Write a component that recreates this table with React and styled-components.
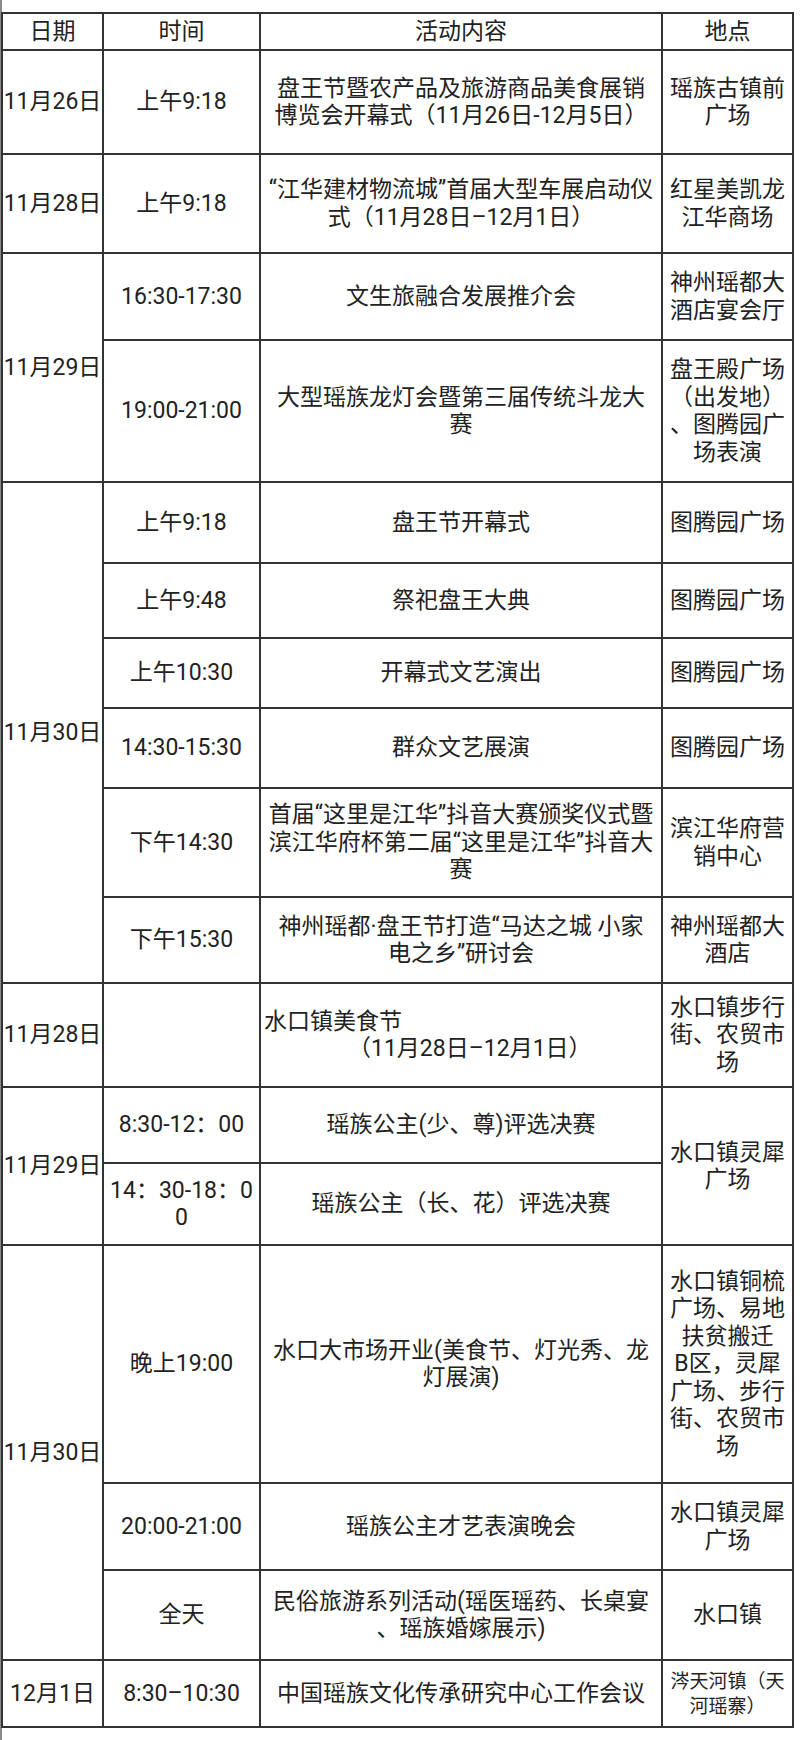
import React from 'react';
import styled, { createGlobalStyle } from 'styled-components';

const GlobalStyle = createGlobalStyle`
  html, body {
    margin: 0;
    padding: 0;
    background: #ffffff;
  }
  body {
    font-family: Roboto, "Noto Sans CJK SC", "Noto Sans", sans-serif;
    color: #222;
  }
`;

const Page = styled.div`
  min-height: 1740px;
  box-sizing: border-box;
  padding-top: 12px;
  border-left: 2px solid #8a8a8a;
`;

const Sheet = styled.table`
  border-collapse: collapse;
  table-layout: fixed;
  width: 790px;
  margin-left: -1px;
  font-size: 23px;
  line-height: 27.5px;
`;

const Row = styled.tr`
  height: ${p => p.$h}px;
`;

const Cell = styled.td`
  border: 2px solid #333;
  padding: 0 3px;
  text-align: center;
  vertical-align: middle;
  overflow: visible;
`;

const HeadCell = styled(Cell).attrs({ as: 'th' })`
  font-weight: 400;
`;

const DateCell = styled(Cell)`
  padding: 0;
  white-space: nowrap;
`;

const TimeCell = styled(Cell)`
  padding: 0 2px;
`;

const EventCell = styled(Cell)`
  text-align: ${p => (p.$left ? 'left' : 'center')};
`;

const PlaceCell = styled(Cell)`
  padding: 0 2px;
  font-size: ${p => (p.$small ? '19px' : '23px')};
  line-height: ${p => (p.$small ? '25px' : '27.5px')};
`;

const Line = styled.span`
  display: block;
  white-space: nowrap;
  padding-left: ${p => p.$indent || 0}px;
`;

const Lines = ({ items }) =>
  items.map((t, i) =>
    typeof t === 'string' ? <Line key={i}>{t}</Line> : <Line key={i} $indent={t.indent}>{t.text}</Line>
  );

const rows = [
  { h: 104, date: '11月26日', time: ['上午9:18'], event: ['盘王节暨农产品及旅游商品美食展销', '博览会开幕式（11月26日-12月5日）'], place: ['瑶族古镇前', '广场'] },
  { h: 99, date: '11月28日', time: ['上午9:18'], event: ['“江华建材物流城”首届大型车展启动仪', '式（11月28日–12月1日）'], place: ['红星美凯龙', '江华商场'] },
  { h: 87, date: '11月29日', span: 2, time: ['16:30-17:30'], event: ['文生旅融合发展推介会'], place: ['神州瑶都大', '酒店宴会厅'] },
  { h: 142, time: ['19:00-21:00'], event: ['大型瑶族龙灯会暨第三届传统斗龙大', '赛'], place: ['盘王殿广场', '（出发地）', '、图腾园广', '场表演'] },
  { h: 81, date: '11月30日', span: 6, time: ['上午9:18'], event: ['盘王节开幕式'], place: ['图腾园广场'] },
  { h: 75, time: ['上午9:48'], event: ['祭祀盘王大典'], place: ['图腾园广场'] },
  { h: 70, time: ['上午10:30'], event: ['开幕式文艺演出'], place: ['图腾园广场'] },
  { h: 80, time: ['14:30-15:30'], event: ['群众文艺展演'], place: ['图腾园广场'] },
  { h: 109, time: ['下午14:30'], event: ['首届“这里是江华”抖音大赛颁奖仪式暨', '滨江华府杯第二届“这里是江华”抖音大', '赛'], place: ['滨江华府营', '销中心'] },
  { h: 86, time: ['下午15:30'], event: ['神州瑶都·盘王节打造“马达之城 小家', '电之乡”研讨会'], place: ['神州瑶都大', '酒店'] },
  { h: 104, date: '11月28日', time: [], left: true, event: ['水口镇美食节', { text: '（11月28日–12月1日）', indent: 84 }], place: ['水口镇步行', '街、农贸市', '场'] },
  { h: 76, date: '11月29日', span: 2, time: ['8:30-12：00'], event: ['瑶族公主(少、尊)评选决赛'], place: ['水口镇灵犀', '广场'], placeSpan: 2 },
  { h: 82, time: ['14：30-18：0', '0'], event: ['瑶族公主（长、花）评选决赛'], noPlace: true },
  { h: 238, date: '11月30日', span: 3, time: ['晚上19:00'], event: ['水口大市场开业(美食节、灯光秀、龙', '灯展演)'], place: ['水口镇铜梳', '广场、易地', '扶贫搬迁', 'B区，灵犀', '广场、步行', '街、农贸市', '场'] },
  { h: 87, time: ['20:00-21:00'], event: ['瑶族公主才艺表演晚会'], place: ['水口镇灵犀', '广场'] },
  { h: 90, time: ['全天'], event: ['民俗旅游系列活动(瑶医瑶药、长桌宴', '、瑶族婚嫁展示)'], place: ['水口镇'] },
  { h: 67, date: '12月1日', time: ['8:30–10:30'], event: ['中国瑶族文化传承研究中心工作会议'], place: ['涔天河镇（天', '河瑶寨）'], small: true },
];

const App = () => (
  <>
    <GlobalStyle />
    <Page>
      <Sheet>
        <colgroup>
          <col style={{ width: 101 }} />
          <col style={{ width: 157 }} />
          <col style={{ width: 402 }} />
          <col style={{ width: 131 }} />
        </colgroup>
        <tbody>
          <Row $h={37}>
            <HeadCell>日期</HeadCell>
            <HeadCell>时间</HeadCell>
            <HeadCell>活动内容</HeadCell>
            <HeadCell>地点</HeadCell>
          </Row>
          {rows.map((r, i) => (
            <Row key={i} $h={r.h}>
              {r.date && <DateCell rowSpan={r.span || 1}>{r.date}</DateCell>}
              <TimeCell><Lines items={r.time} /></TimeCell>
              <EventCell $left={r.left}><Lines items={r.event} /></EventCell>
              {!r.noPlace && (
                <PlaceCell rowSpan={r.placeSpan || 1} $small={r.small}>
                  <Lines items={r.place} />
                </PlaceCell>
              )}
            </Row>
          ))}
        </tbody>
      </Sheet>
    </Page>
  </>
);

export default App;
